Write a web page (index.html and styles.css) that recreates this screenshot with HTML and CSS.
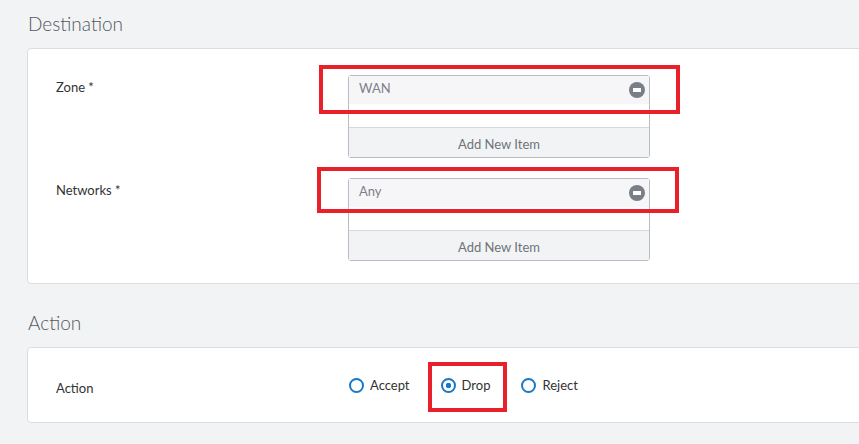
FILE: index.html
```html
<!DOCTYPE html>
<html>
<head>
  <meta charset="utf-8">
  <title>Rule</title>
  <link rel="stylesheet" href="styles.css">
</head>
<body>
  <div class="page">
    <h2 class="section-title">Destination</h2>
    <div class="card">
      <div class="row">
        <label class="label">Zone *</label>
        <div class="multi">
          <div class="item">
            <span>WAN</span>
            <span class="remove"></span>
          </div>
          <div class="blank"></div>
          <div class="add">Add New Item</div>
          <div class="mark mark-zone"></div>
        </div>
      </div>
      <div class="row">
        <label class="label">Networks *</label>
        <div class="multi">
          <div class="item">
            <span>Any</span>
            <span class="remove"></span>
          </div>
          <div class="blank"></div>
          <div class="add">Add New Item</div>
          <div class="mark mark-net"></div>
        </div>
      </div>
    </div>

    <h2 class="section-title action-title">Action</h2>
    <div class="card card-action">
      <div class="row row-action">
        <label class="label">Action</label>
        <div class="radios">
          <label class="radio"><span class="dot"></span>Accept</label>
          <label class="radio checked"><span class="dot"></span>Drop<span class="mark mark-drop"></span></label>
          <label class="radio"><span class="dot"></span>Reject</label>
        </div>
      </div>
    </div>
  </div>
</body>
</html>
```

FILE: styles.css
```css
body {
  margin: 0;
  background: #f1f3f4;
  font-family: Lato, "Liberation Sans", sans-serif;
  overflow: hidden;
}

.page {
  padding: 0 0 0 27px;
}

.section-title {
  margin: 0;
  padding: 12px 0 0 1px;
  height: 48px;
  box-sizing: border-box;
  font-size: 19px;
  font-weight: 300;
  color: #55585e;
}

.action-title {
  padding-top: 27px;
  height: 63px;
}

.card {
  margin-right: -20px;
  background: #fff;
  border: 1px solid #dcdde0;
  border-radius: 4px;
  padding: 26px 0 22px 28px;
}

.card-action {
  padding: 0 0 0 28px;
  height: 74px;
}

.row {
  display: flex;
  align-items: flex-start;
}

.row + .row {
  margin-top: 20px;
}

.label {
  width: 292px;
  padding-top: 4px;
  font-size: 13px;
  color: #333;
}

.multi {
  position: relative;
  width: 300px;
  border: 1px solid #b9bcc4;
  border-radius: 3px;
  font-size: 13px;
}

.item {
  display: flex;
  align-items: flex-start;
  justify-content: space-between;
  height: 28px;
  padding: 4px 4px 0 10px;
  box-sizing: border-box;
  background: #f6f6f8;
  color: #7c818a;
}

.remove {
  position: relative;
  width: 16px;
  height: 16px;
  margin-top: 2px;
  border-radius: 50%;
  background: #7a7e86;
}

.remove::after {
  content: "";
  position: absolute;
  left: 4px;
  top: 6px;
  width: 8px;
  height: 4px;
  background: #fff;
}

.blank {
  height: 23px;
  background: #fff;
}

.add {
  height: 29px;
  line-height: 32px;
  text-align: center;
  border-top: 1px solid #d6d8dc;
  background: #f2f3f5;
  color: #6f737a;
}

.mark {
  position: absolute;
  border: 4px solid #e8202a;
  pointer-events: none;
}

.mark-zone {
  left: -30px;
  top: -11px;
  width: 353px;
  height: 41px;
}

.mark-net {
  left: -32px;
  top: -12px;
  width: 354px;
  height: 38px;
}

.row-action {
  height: 100%;
  align-items: center;
}

.row-action .label {
  padding-top: 5px;
}

.radios {
  display: flex;
  align-items: center;
  margin-left: 1px;
}

.radio {
  position: relative;
  display: flex;
  align-items: center;
  margin-right: 31px;
  font-size: 13px;
  color: #333;
}

.dot {
  box-sizing: border-box;
  width: 15px;
  height: 15px;
  margin-right: 6px;
  border: 2px solid #1a78c8;
  border-radius: 50%;
}

.checked .dot {
  background: radial-gradient(circle, #1a78c8 0 2.5px, #fff 3px);
}

.mark-drop {
  left: -13px;
  top: -15px;
  width: 71px;
  height: 42px;
}
```
